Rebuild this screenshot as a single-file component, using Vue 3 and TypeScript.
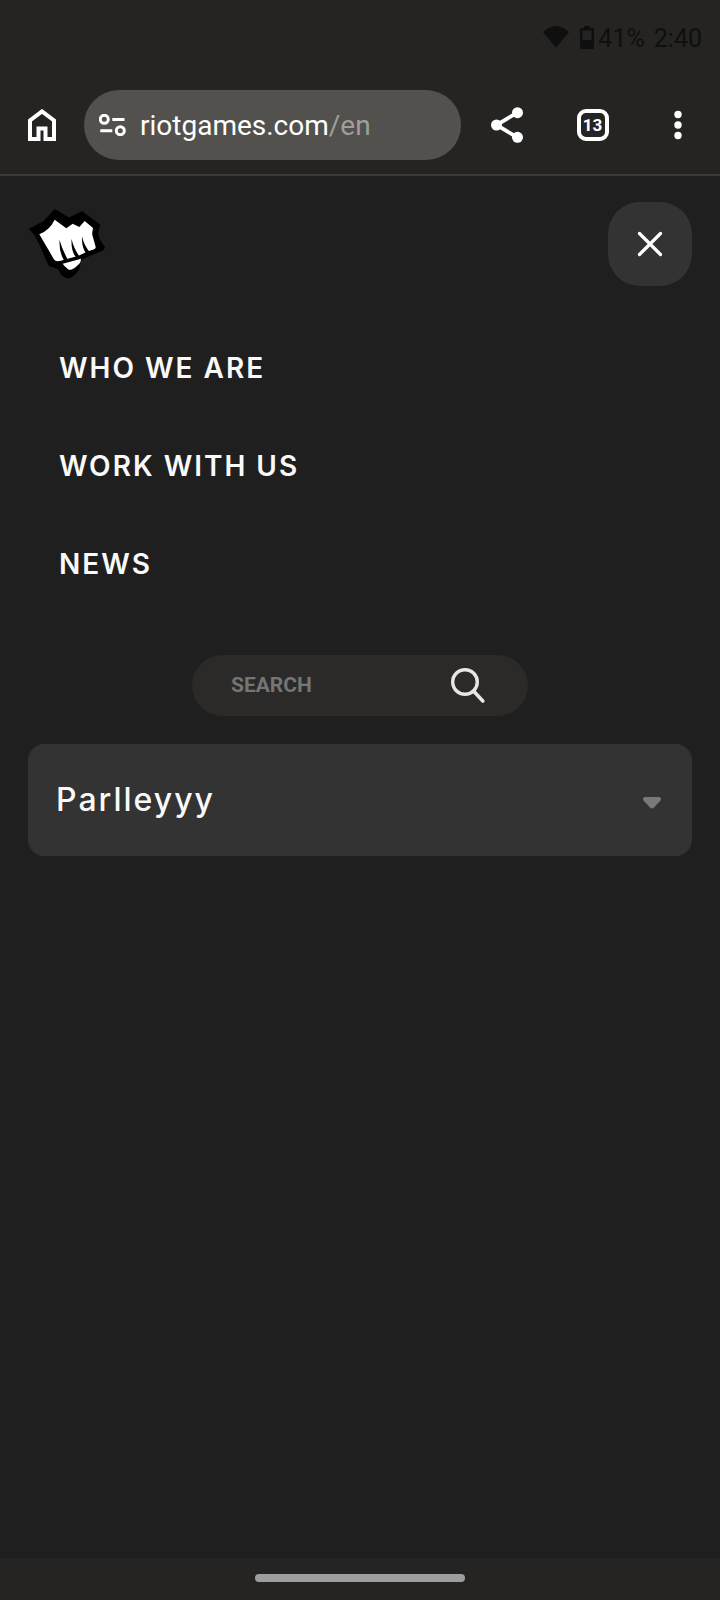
<script setup lang="ts">
import { ref } from 'vue'

interface NavItem {
  label: string
  href: string
}

const navItems: NavItem[] = [
  { label: 'WHO WE ARE', href: '#who-we-are' },
  { label: 'WORK WITH US', href: '#work-with-us' },
  { label: 'NEWS', href: '#news' },
]

const query = ref('')
const accountOpen = ref(false)
const openTabs = 13
</script>

<template>
  <div class="screen">
    <div class="status">
      <svg class="wifi" viewBox="0 0 26 22" aria-hidden="true">
        <path d="M0 6.200Q13 -6 26 6.200L13 21.500Z" fill="currentColor" />
      </svg>
      <svg class="battery" viewBox="0 0 14 23" aria-hidden="true">
        <path
          fill="currentColor"
          fill-rule="evenodd"
          d="M4 0h6v2h2.500Q14 2 14 3.500v18Q14 23 12.500 23h-11Q0 23 0 21.500v-18Q0 2 1.500 2H4ZM2.500 4.500v9.500h9V4.500Z"
        />
      </svg>
      <span class="level">41%</span>
      <span class="clock">2:40</span>
    </div>

    <header class="toolbar">
      <button class="tool home" type="button" aria-label="Home">
        <svg viewBox="0 0 28 32" aria-hidden="true">
          <path
            d="M2 30V11.500L14 2.400 26 11.500V30H17.500V19.500H10.500V30Z"
            fill="none"
            stroke="currentColor"
            stroke-width="4"
          />
        </svg>
      </button>
      <div class="omnibox">
        <button class="site" type="button" aria-label="Site information">
          <svg viewBox="0 0 27 22" aria-hidden="true">
            <g fill="none" stroke="currentColor" stroke-width="3">
              <circle cx="5.300" cy="5.300" r="4" />
              <circle cx="21.300" cy="16.700" r="4" />
              <path d="M13.300 5.500H25.500M1.300 16.700H13.300" />
            </g>
          </svg>
        </button>
        <button class="url" type="button">riotgames.com<span>/en</span></button>
      </div>
      <button class="tool share" type="button" aria-label="Share">
        <svg viewBox="0 0 32 36" aria-hidden="true">
          <path d="M26.500 5.500 5.500 18 26.500 30.500" fill="none" stroke="currentColor" stroke-width="3.800" />
          <g fill="currentColor">
            <circle cx="26.500" cy="5.700" r="5.500" />
            <circle cx="5.500" cy="18" r="5.500" />
            <circle cx="26.500" cy="30.300" r="5.500" />
          </g>
        </svg>
      </button>
      <button class="tool tabs" type="button" aria-label="Open tabs">
        <span>{{ openTabs }}</span>
      </button>
      <button class="tool more" type="button" aria-label="More options">
        <svg viewBox="0 0 8 30" aria-hidden="true" fill="currentColor">
          <circle cx="4" cy="4.500" r="3.700" />
          <circle cx="4" cy="15" r="3.700" />
          <circle cx="4" cy="25.500" r="3.700" />
        </svg>
      </button>
    </header>

    <main class="page">
      <div class="top">
        <a class="logo" href="#home" aria-label="Riot Games">
          <svg viewBox="0 0 77 70" aria-hidden="true">
            <path
              fill="#000"
              d="M.7 20 15.700 12 26.700 0 41 8.500 54 2.300 72.300 15.700 70 24.700 72 30.700 77 38Q76 41 74 42L57 49Q54 50 53 52L51 61Q47 67 40.700 69.700 36 69 33 65.700L30 60 21 57.300 18 51 10.700 34Q6 24 .7 20Z"
            />
            <path
              fill="#fff"
              d="M11.300 25.300Q17 23 20.700 19.300 24 16 26.700 10.700L38.300 19.300 44.700 14.700 51.300 18 56.700 12 65 19Q64 24 64.300 25.700L67.700 38Q68 40 65 40.700L60.700 42 50 47 37 50.500Q28 54 26 50.500L22.300 44Z"
            />
            <path
              fill="#000"
              d="M31.500 31Q34 40 40 51L36.500 52Q31 44 31.500 31ZM43.500 30Q46 40 51.500 47.500L48 48.500Q43 42 43.500 30ZM54 27.500Q56 36 61.500 43L58 44.500Q53.500 38 54 27.500Z"
            />
            <path
              fill="#fff"
              d="M34.700 54.700 44 52.300 53 49.700Q53 53 51.300 54.700 46 60 43 60.700 41 61 40.700 60.700L36.700 57.300Z"
            />
          </svg>
        </a>
        <button class="close" type="button" aria-label="Close menu">
          <svg viewBox="0 0 26 26" aria-hidden="true">
            <path
              d="M2.500 2.500 23.500 23.500M23.500 2.500 2.500 23.500"
              stroke="currentColor"
              stroke-width="3.200"
              stroke-linecap="round"
            />
          </svg>
        </button>
      </div>

      <nav class="menu">
        <a v-for="item in navItems" :key="item.label" :href="item.href">{{ item.label }}</a>
      </nav>

      <form class="search" role="search" @submit.prevent>
        <input v-model="query" type="search" placeholder="SEARCH" aria-label="Search" />
        <button type="submit" aria-label="Search">
          <svg viewBox="0 0 34 36" aria-hidden="true" fill="none" stroke="currentColor">
            <circle cx="14" cy="14" r="12.300" stroke-width="3.400" />
            <path d="M22.500 23 31.800 33" stroke-width="3.600" stroke-linecap="round" />
          </svg>
        </button>
      </form>

      <button
        class="account"
        type="button"
        aria-haspopup="menu"
        :aria-expanded="accountOpen"
        @click="accountOpen = !accountOpen"
      >
        <span>Parlleyyy</span>
        <svg viewBox="0 0 18 12" aria-hidden="true">
          <path
            fill="currentColor"
            d="M2 0H16Q18 0 18 1.800 18 3 17 4L11 10.500Q9 12.300 7 10.500L1 4Q0 3 0 1.800 0 0 2 0Z"
          />
        </svg>
      </button>
    </main>

    <footer class="gesture"><span></span></footer>
  </div>
</template>

<style>
html,
body {
  margin: 0;
  background: #1f1f1f;
}
</style>

<style scoped>
.screen {
  display: flex;
  flex-direction: column;
  min-height: 100vh;
  background: #1f1f1f;
  color: #fff;
  font-family: Roboto, 'Liberation Sans', sans-serif;
}

svg {
  display: block;
}

button {
  display: flex;
  align-items: center;
  justify-content: center;
  flex: none;
  padding: 0;
  border: 0;
  background: none;
  color: inherit;
  font: inherit;
  cursor: pointer;
}

a {
  color: inherit;
  text-decoration: none;
}

.status {
  display: flex;
  align-items: center;
  justify-content: flex-end;
  box-sizing: border-box;
  height: 76px;
  padding: 2px 18px 0 0;
  background: #252422;
  color: #0f0f0f;
  font-size: 25px;
  font-weight: 400;
  line-height: 32px;
}

.wifi {
  width: 26px;
  height: 22px;
  margin-bottom: 4px;
}

.battery {
  width: 14px;
  height: 23px;
  margin: 0 4px 3px 11px;
}

.level {
  margin-right: 9px;
}

.toolbar {
  display: flex;
  align-items: center;
  height: 98px;
  border-bottom: 2px solid #3b3a38;
  background: #252422;
}

.tool {
  width: 85px;
  height: 84px;
}

.home {
  width: 84px;
}

.home svg {
  width: 28px;
  height: 32px;
}

.omnibox {
  display: flex;
  align-items: center;
  flex: 1;
  height: 70px;
  padding-left: 14px;
  border-radius: 35px;
  background: #52514e;
}

.site {
  width: 28px;
  height: 48px;
}

.site svg {
  width: 27px;
  height: 22px;
}

.url {
  flex: 1;
  justify-content: flex-start;
  margin-left: 14px;
  padding-top: 2px;
  font-size: 28px;
  line-height: 36px;
}

.url span {
  color: #a09f9d;
}

.share {
  width: 86px;
  margin-left: 3px;
}

.share svg {
  width: 32px;
  height: 36px;
}

.tabs span {
  display: flex;
  align-items: center;
  justify-content: center;
  box-sizing: border-box;
  width: 32px;
  height: 32px;
  border: 4px solid #fff;
  border-radius: 9px;
  font-size: 17px;
  font-weight: 700;
}

.more svg {
  width: 8px;
  height: 30px;
}

.page {
  display: flex;
  flex-direction: column;
  flex: 1;
  padding: 26px 28px;
}

.top {
  display: flex;
  align-items: center;
  justify-content: space-between;
}

.logo svg {
  width: 77px;
  height: 70px;
}

.close {
  width: 84px;
  height: 84px;
  border-radius: 32px;
  background: #333;
}

.close svg {
  width: 26px;
  height: 26px;
}

.menu {
  display: flex;
  flex-direction: column;
  margin-top: 33px;
  padding: 0 31px;
}

.menu a {
  color: #f9f9f9;
  font-family: Inter, 'Liberation Sans', sans-serif;
  font-size: 28px;
  font-weight: 600;
  letter-spacing: 2px;
  line-height: 98px;
}

.search {
  display: flex;
  align-items: center;
  box-sizing: border-box;
  align-self: center;
  width: 336px;
  height: 61px;
  margin: 42px 0 28px;
  padding: 0 43px 0 39px;
  border-radius: 31px;
  background: #2b2a28;
}

.search input {
  flex: 1;
  min-width: 0;
  padding: 0 0 2px;
  border: 0;
  outline: 0;
  background: none;
  color: #e8e6e3;
  font: 700 21px/28px Roboto, 'Liberation Sans', sans-serif;
  appearance: none;
}

.search input::placeholder {
  color: #757575;
  opacity: 1;
}

.search button {
  color: #e8e6e3;
}

.search svg {
  width: 34px;
  height: 36px;
}

.account {
  justify-content: space-between;
  height: 112px;
  padding: 0 31px 0 28px;
  border-radius: 16px;
  background: #333;
  color: #f9f9f9;
  font-family: Inter, 'Liberation Sans', sans-serif;
  font-size: 32px;
  font-weight: 500;
  letter-spacing: 2px;
  line-height: 40px;
}

.account svg {
  width: 18px;
  height: 12px;
  margin-top: 6px;
  color: #797979;
}

.gesture {
  display: flex;
  align-items: center;
  justify-content: center;
  box-sizing: border-box;
  height: 42px;
  padding-bottom: 2px;
  background: #252422;
}

.gesture span {
  width: 210px;
  height: 8px;
  border-radius: 4px;
  background: #9d9d9d;
}
</style>
